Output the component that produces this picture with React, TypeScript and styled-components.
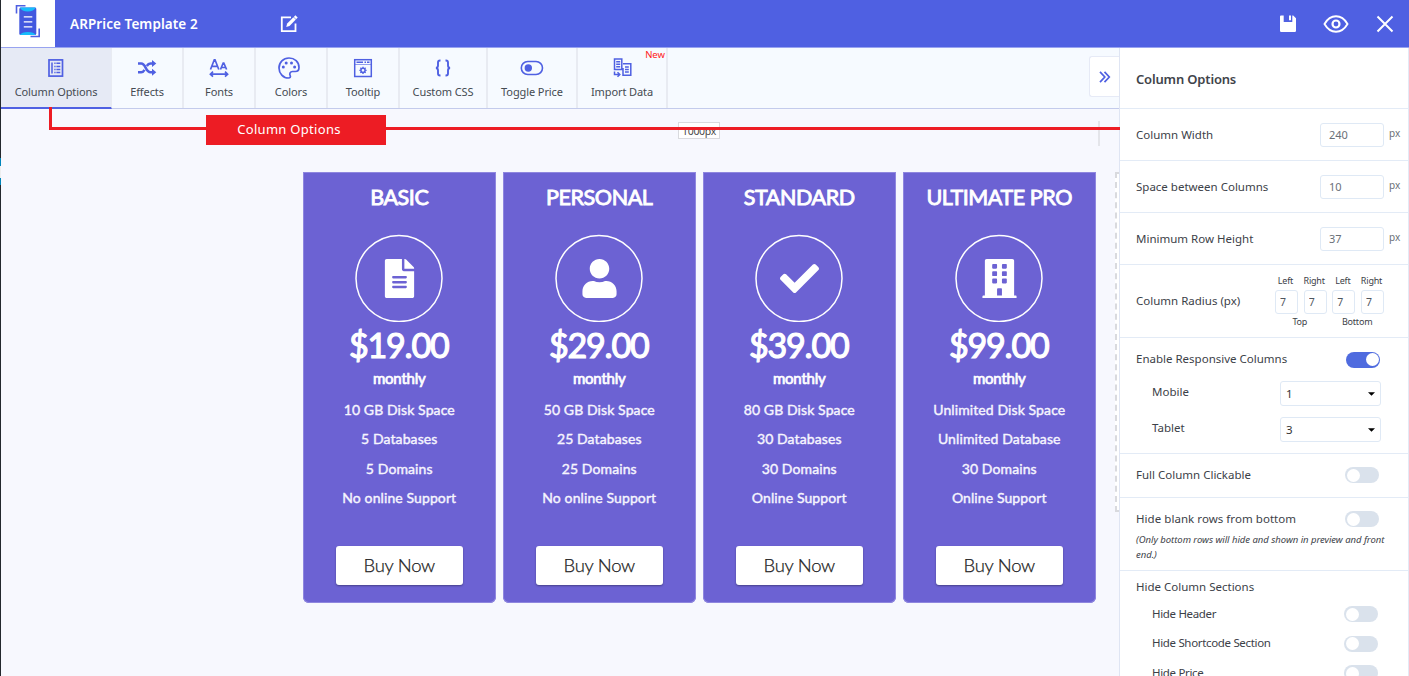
import React from "react";
import styled, { createGlobalStyle } from "styled-components";
import { FaBuilding, FaCheck, FaFileAlt, FaUser } from "react-icons/fa";

const BLUE = "#4f60e2";
const RED = "#ed1c24";
const UI = '"Noto Sans", "Open Sans", sans-serif';

const Global = createGlobalStyle`
  * { box-sizing: border-box; }
  body { margin: 0; background: #f7f8fe; font-family: ${UI}; color: #3c4148; }
  button, input { font: inherit; margin: 0; }
  svg { display: block; flex: none; }
`;

const Page = styled.div`
  position: relative;
  display: flex;
  width: 1409px;
  height: 676px;
  overflow: hidden;
`;

const Edge = styled.div`
  width: 1px;
  flex: none;
  background: linear-gradient(#23282d 158px, #0085ba 158px 166px, #eee 166px 178px, #0085ba 178px 185px, #23282d 185px);
`;

const Shell = styled.div`
  flex: 1;
  min-width: 0;
  display: flex;
  flex-direction: column;
`;

const TopBar = styled.header`
  display: flex;
  align-items: center;
  height: 48px;
  flex: none;
  background: ${BLUE};
  border-bottom: 1px solid #98a3f0;
`;

const LogoBox = styled.div`
  width: 54px;
  height: 47px;
  background: #fff;
  padding: 4px 0 0 12.5px;
`;

const TemplateName = styled.h1`
  margin: 0 0 0 15px;
  width: 210px;
  font-size: 13.5px;
  font-weight: 600;
  letter-spacing: 0.08px;
  color: #fff;
  white-space: nowrap;
`;

const TopActions = styled.div`
  display: flex;
  align-items: center;
  gap: 27px;
  margin-left: auto;
  padding-right: 15px;
`;

const Body = styled.div`
  flex: 1;
  min-height: 0;
  display: flex;
`;

const Workspace = styled.main`
  position: relative;
  width: 1118px;
  flex: none;
  overflow: hidden;
`;

const Toolbar = styled.nav`
  display: flex;
  height: 61px;
  background: #f6faff;
  border-bottom: 1px solid #c3cbec;
`;

const Tool = styled.button<{ $w: number; $active?: boolean }>`
  position: relative;
  display: flex;
  flex-direction: column;
  align-items: center;
  width: ${(p) => p.$w}px;
  flex: none;
  height: ${(p) => (p.$active ? 61 : 60)}px;
  padding: 8px 0 0;
  border: 0;
  border-right: ${(p) => (p.$active ? 1 : 2)}px solid #e8ebf2;
  border-bottom: ${(p) => (p.$active ? `2px solid ${BLUE}` : "0")};
  background: ${(p) => (p.$active ? "#e6eaf5" : "transparent")};
  color: ${BLUE};
`;

const ToolIcon = styled.span`
  display: grid;
  place-items: center;
  height: 24px;
`;

const ToolLabel = styled.span`
  margin-top: 3px;
  font-size: 11px;
  line-height: 18px;
  letter-spacing: -0.1px;
  color: #454b52;
  white-space: nowrap;
`;

const NewTag = styled.span`
  position: absolute;
  top: 0;
  right: 1px;
  font-size: 9.5px;
  line-height: 14px;
  color: #ff2020;
`;

const PanelToggle = styled.button`
  position: absolute;
  top: 8px;
  right: 0;
  width: 30px;
  height: 41px;
  display: grid;
  place-items: center;
  padding: 0;
  border: 1px solid #e6eaf6;
  border-right: 0;
  border-radius: 3px 0 0 3px;
  background: #fff;
`;

const Ruler = styled.div`
  display: flex;
  justify-content: center;
  align-items: flex-start;
  width: 801px;
  height: 25px;
  margin: 12px 0 0 298px;
  border: solid #e4e5ea;
  border-width: 0 2px 0 0;
  clip-path: inset(0);
`;

const RulerLabel = styled.span`
  width: 42px;
  height: 17px;
  margin: 1px 0 0 1px;
  border: 1px solid #d9dade;
  background: #fff;
  font-size: 10.5px;
  line-height: 16px;
  letter-spacing: -0.3px;
  text-align: center;
  color: #4a4a4a;
`;

const Plans = styled.section`
  display: flex;
  gap: 8px;
  margin: 26px 0 0 302px;
  width: 1000px;
`;

const Plan = styled.article`
  display: flex;
  flex-direction: column;
  align-items: center;
  width: 192.5px;
  height: 430.5px;
  flex: none;
  margin-right: -0.5px;
  border-radius: 0 0 6px 6px;
  background: #6c62d3;
  box-shadow: inset 0 0 0 1px #8f87df;
  color: #fff;
  font-family: Lato, sans-serif;
  white-space: nowrap;
`;

const PlanTitle = styled.h2`
  margin: 11px 0 0;
  font-size: 21.5px;
  line-height: 28px;
  font-weight: 400;
  letter-spacing: -0.42px;
  -webkit-text-stroke: 0.9px #fff;
`;

const PlanBadge = styled.div`
  display: grid;
  place-items: center;
  width: 88px;
  height: 88px;
  margin-top: 23px;
`;

const BadgeRing = styled.svg`
  grid-area: 1 / 1;
`;

const BadgeIcon = styled.span`
  grid-area: 1 / 1;
`;

const Price = styled.div`
  margin: 3px 0 0 -1px;
  font-size: 34px;
  line-height: 40px;
  font-weight: 400;
  letter-spacing: -1.2px;
  -webkit-text-stroke: 1.2px #fff;
`;

const Period = styled.div`
  margin-top: 3px;
  font-size: 15px;
  line-height: 20px;
  font-weight: 400;
  letter-spacing: -0.2px;
  -webkit-text-stroke: 0.7px #fff;
`;

const Features = styled.ul`
  list-style: none;
  margin: 7px 0 0;
  padding: 0;
  text-align: center;
  font-size: 14px;
  line-height: 29.4px;
  letter-spacing: 0.1px;
  -webkit-text-stroke: 0.4px #f6f5fe;
  color: #f6f5fe;
`;

const Buy = styled.button`
  width: 127px;
  height: 39px;
  margin-top: 33px;
  padding: 0;
  border: 0;
  border-radius: 3px;
  background: #fff;
  box-shadow: 0 1px 2px rgba(0, 0, 0, 0.35);
  font-family: Lato, sans-serif;
  font-weight: 300;
  font-size: 18.5px;
  letter-spacing: -0.3px;
  -webkit-text-stroke: 0.25px #222;
  color: #222;
`;

const AddColumn = styled.div`
  width: 192px;
  height: 340px;
  flex: none;
  margin-left: 12px;
  border: 2px dashed #d9dade;
  background: #fff;
`;

const Panel = styled.aside`
  flex: 1;
  background: #fff;
  border-left: 1px solid #dfe5f3;
  border-right: 1px solid #e3e9f5;
`;

const PanelTitle = styled.h2`
  display: flex;
  align-items: center;
  height: 61px;
  margin: 0;
  padding: 2px 0 0 16px;
  border-bottom: 1px solid #e3ebf6;
  font-size: 13px;
  font-weight: 600;
  letter-spacing: -0.17px;
  color: #3f444a;
`;

const Section = styled.section<{ $h: number }>`
  height: ${(p) => p.$h}px;
  padding: 0 0 0 16px;
  border-bottom: 1px solid #e3ebf6;
`;

const Row = styled.div<{ $h: number; $indent?: boolean; $end?: number }>`
  display: flex;
  align-items: center;
  justify-content: space-between;
  height: ${(p) => p.$h}px;
  padding: 0 ${(p) => p.$end ?? 28}px 0 ${(p) => (p.$indent ? 16 : 0)}px;
`;

const Label = styled.span<{ $lift?: number; $ls?: number }>`
  padding-bottom: ${(p) => p.$lift ?? 0}px;
  font-size: 11.5px;
  letter-spacing: ${(p) => p.$ls ?? 0}px;
  white-space: nowrap;
`;

const Unit = styled.span`
  width: 20px;
  padding: 0 0 3px 5px;
  font-size: 10px;
  color: #6b7077;
`;

const FieldGroup = styled.span`
  display: flex;
  align-items: center;
`;

const Field = styled.input`
  width: 64px;
  height: 24px;
  padding: 0 8px;
  border: 1px solid #dfe9f5;
  border-radius: 3px;
  background: #fff;
  font-size: 11px;
  color: #6a7078;
`;

const Radii = styled.div`
  display: grid;
  grid-template-columns: repeat(4, 23px);
  column-gap: 5.7px;
  justify-items: center;
  padding-top: 1px;
  font-size: 9px;
  line-height: 12px;
  letter-spacing: -0.2px;
`;

const RadiusField = styled(Field)`
  width: 23px;
  margin: 3px 0 2px;
  padding: 0 0 0 4px;
  font-size: 10.5px;
  color: #50565e;
`;

const RadiusSide = styled.span`
  margin-left: -2px;
`;

const Pair = styled.span`
  grid-column: span 2;
  margin-left: -2px;
`;

const Select = styled.button`
  display: flex;
  align-items: center;
  justify-content: space-between;
  width: 101px;
  height: 25px;
  padding: 0 5px;
  border: 1px solid #dfe9f5;
  border-radius: 3px;
  background: #fff;
  font-size: 11.5px;
  color: #333;
`;

const Switch = styled.span<{ $on?: boolean }>`
  display: flex;
  justify-content: ${(p) => (p.$on ? "flex-end" : "flex-start")};
  width: 34px;
  height: 16px;
  padding: 1.5px;
  border-radius: 8px;
  background: ${(p) => (p.$on ? "#4f6bdf" : "#dae2ec")};
  &::after {
    content: "";
    width: 13px;
    height: 13px;
    border-radius: 50%;
    background: #fff;
  }
`;

const Note = styled.p`
  margin: -8px 16px 0 0;
  font-size: 9.5px;
  line-height: 15px;
  letter-spacing: -0.03px;
  font-style: italic;
`;

const Callout = styled.div`
  position: absolute;
  left: 49px;
  top: 107px;
  width: 1071px;
  height: 38px;
  pointer-events: none;
`;

const CalloutLabel = styled.div`
  position: absolute;
  left: 157px;
  top: 8px;
  width: 180px;
  height: 30px;
  padding-right: 14px;
  background: ${RED};
  color: #fff;
  font-size: 13px;
  line-height: 28px;
  letter-spacing: 0.3px;
  text-align: center;
`;

const CalloutLines = styled.svg`
  position: absolute;
  inset: 0;
`;

const Caret = () => (
  <svg width="7" height="4" viewBox="0 0 7 4"><path d="M0 0.3h7L3.5 3.8z" fill="#000" /></svg>
);

const Logo = () => (
  <svg width="28" height="36" viewBox="0 0 28 36" fill="none">
    <path d="M2.500 9.500V1.700H11.500M16.500 32.500H25.200V24.500" stroke={BLUE} strokeWidth="1.600" />
    <rect x="5.300" y="3.500" width="17" height="27.500" rx="1.500" fill="#4258df" />
    <path d="M5.800 3.500H21.800Q19.800 7.500 13.800 7.500T5.800 3.500ZM5.800 31Q7.800 28 13.800 28T21.800 31Z" fill="#16bdfb" />
    <path d="M9.800 12.800H18.300M9.800 17.800H18.300M9.800 22.800H18.300" stroke="#fff" strokeWidth="1.300" />
  </svg>
);

const EditIcon = () => (
  <svg width="18" height="18" viewBox="0 0 18 18" fill="none" stroke="#fff">
    <path d="M11 2.300H1.800V16.200H15.500V8.500" strokeWidth="1.800" />
    <path d="M6.200 12L7.200 8.600L13.400 2.200L15.800 4.500L9.500 10.900Z" fill="#fff" stroke="none" />
    <path d="M14.600 1.100L16.900 3.400" strokeWidth="2.200" />
  </svg>
);

const ListIcon = () => (
  <svg width="16" height="18" viewBox="0 0 16 18" fill="none" stroke={BLUE}>
    <rect x="1" y="0.900" width="13.500" height="16.200" strokeWidth="1.700" />
    <path d="M4 3.500V14.500M6.300 4.300H7.600M8.400 4.300H12.300M6.300 7.400H7.600M8.400 7.400H12.300M6.300 10.500H7.600M8.400 10.500H12.300M6.300 13.500H7.600M8.400 13.500H12.300" strokeWidth="1.500" />
  </svg>
);

const EffectsIcon = () => (
  <svg width="20" height="16" viewBox="0 0 20 16" fill="none" stroke={BLUE} strokeWidth="2.500">
    <path d="M1 3.500H4.200C9 3.500 8.500 12.300 13.500 12.300H16M1 12.300H4.200C5.800 12.300 6.700 11.200 7.500 9.800M9.800 6C10.700 4.500 11.700 3.500 13.500 3.500H16" />
    <path d="M15 0L19.300 3.500L15 7ZM15 8.800L19.300 12.300L15 15.800Z" fill={BLUE} stroke="none" />
  </svg>
);

const FontsIcon = () => (
  <svg width="20" height="19" viewBox="0 0 20 19" fill="none" stroke={BLUE} strokeWidth="1.700">
    <path d="M1.500 10.500L5.300 0.800H6L9.800 10.500M2.800 7.300H8.500M11.500 10.500L14.200 4H14.800L17.600 10.500M12.500 8.500H16.600M1.500 15.200H18.500M4 12.700L1.400 15.200L4 17.700M16 12.700L18.600 15.200L16 17.700" />
  </svg>
);

const PaletteIcon = () => (
  <svg width="26" height="22" viewBox="2 0 22 22" preserveAspectRatio="xMidYMid" fill="none" stroke={BLUE} strokeWidth="1.700">
    <path d="M11 1C5.300 1 1 5.400 1 11C1 16.500 5.300 21 10.500 21C12.200 21 12.800 19.900 12.200 18.700C11.100 16.600 12.200 14.500 14.500 14.500H17.300C19.800 14.500 21 13 21 10.500C21 5 16.600 1 11 1Z" />
    <g fill={BLUE} stroke="none"><circle cx="5.300" cy="10" r="1.500" /><circle cx="8.200" cy="5.900" r="1.500" /><circle cx="13.500" cy="5.900" r="1.500" /><circle cx="16.600" cy="10" r="1.500" /></g>
  </svg>
);

const TooltipIcon = () => (
  <svg width="20" height="20" viewBox="0 0 20 20" fill="none" stroke={BLUE}>
    <rect x="1.700" y="1.700" width="16.600" height="16.800" strokeWidth="1.500" />
    <path d="M2 6.500H18" strokeWidth="1" opacity=".6" />
    <path d="M3.500 4.200H10M11.500 4.200H13M14 4.200H16.500" strokeWidth="1.500" />
    <circle cx="10" cy="12.300" r="2.100" strokeWidth="1.500" />
    <path d="M10 8.700V10M10 14.600V15.900M6.400 12.300H7.700M12.300 12.300H13.600M7.400 9.700L8.300 10.600M11.700 14L12.600 14.900M12.600 9.700L11.700 10.600M8.300 14L7.400 14.900" strokeWidth="1.300" />
  </svg>
);

const BracesIcon = () => (
  <svg width="16" height="18" viewBox="0 0 16 18" fill="none" stroke={BLUE} strokeWidth="1.900">
    <path d="M5.500 1.500H5C3.500 1.500 3 2.300 3 3.600V6.500C3 8 2.500 8.800 1 9C2.500 9.200 3 10 3 11.500V14.400C3 15.700 3.500 16.500 5 16.500H5.500M10.500 1.500H11C12.500 1.500 13 2.300 13 3.600V6.500C13 8 13.500 8.800 15 9C13.500 9.200 13 10 13 11.500V14.400C13 15.700 12.500 16.500 11 16.500H10.500" />
  </svg>
);

const ToggleIcon = () => (
  <svg width="24" height="16" viewBox="0 0 24 16" fill="none" stroke={BLUE} strokeWidth="1.600">
    <rect x="1.300" y="1.500" width="21.200" height="13" rx="6.500" />
    <circle cx="8.300" cy="8" r="3.700" fill={BLUE} stroke="none" />
  </svg>
);

const ImportIcon = () => (
  <svg width="20" height="20" viewBox="0 0 20 20" fill="none" stroke={BLUE} strokeWidth="1.500">
    <path d="M2.500 1H9.800V11.500H2.500ZM11 5.700H18.800V17.300H11V10" />
    <path d="M4.200 3.800H8.200M4.200 6.300H8.200M4.200 8.800H8.200M13 9H16.800M13 11.500H16.800M13 14H16.800M2.500 13.500V16.500H7.500M5.500 14.200L7.800 16.500L5.500 18.800" />
  </svg>
);

const SaveIcon = () => (
  <svg width="16" height="18" viewBox="0 0 16 18">
    <path d="M1 0.500H3.700V7H12.300V0.500H13.200L16 3.300V15.800Q16 17 14.800 17H1.200Q0 17 0 15.800V1.500Q0 .5 1 .5ZM9 .5H11V5.200H9Z" fill="#fff" />
  </svg>
);

const EyeIcon = () => (
  <svg width="26" height="18" viewBox="0 0 26 18" fill="none" stroke="#fff" strokeWidth="1.900">
    <path d="M1.500 9C4.500 3.800 8.500 1.300 13 1.300S21.500 3.800 24.500 9C21.500 14.200 17.500 16.700 13 16.700S4.500 14.200 1.500 9Z" />
    <circle cx="13" cy="9" r="3.500" strokeWidth="2.200" />
  </svg>
);

const CloseIcon = () => (
  <svg width="18" height="18" viewBox="0 0 18 18"><path d="M1.500 1.500L16.500 16.500M16.500 1.500L1.500 16.500" stroke="#fff" strokeWidth="2" /></svg>
);

const ChevronsIcon = () => (
  <svg width="12" height="12" viewBox="0 0 12 12" fill="none" stroke={BLUE} strokeWidth="1.700"><path d="M1 .8L5.800 6L1 11.200M5.500 .8L10.300 6L5.500 11.200" /></svg>
);

const tools = [
  { label: "Column Options", icon: <ListIcon />, w: 111, active: true },
  { label: "Effects", icon: <EffectsIcon />, w: 72 },
  { label: "Fonts", icon: <FontsIcon />, w: 72 },
  { label: "Colors", icon: <PaletteIcon />, w: 72 },
  { label: "Tooltip", icon: <TooltipIcon />, w: 72 },
  { label: "Custom CSS", icon: <BracesIcon />, w: 88 },
  { label: "Toggle Price", icon: <ToggleIcon />, w: 90 },
  { label: "Import Data", icon: <ImportIcon />, w: 90, tag: "New" },
];

const plans = [
  { name: "BASIC", price: "$19.00", Icon: FaFileAlt, rows: ["10 GB Disk Space", "5 Databases", "5 Domains", "No online Support"] },
  { name: "PERSONAL", price: "$29.00", Icon: FaUser, rows: ["50 GB Disk Space", "25 Databases", "25 Domains", "No online Support"] },
  { name: "STANDARD", price: "$39.00", Icon: FaCheck, rows: ["80 GB Disk Space", "30 Databases", "30 Domains", "Online Support"] },
  { name: "ULTIMATE PRO", price: "$99.00", Icon: FaBuilding, rows: ["Unlimited Disk Space", "Unlimited Database", "30 Domains", "Online Support"] },
];

const sizes = [
  { label: "Column Width", value: "240" },
  { label: "Space between Columns", value: "10" },
  { label: "Minimum Row Height", value: "37" },
];

export default function App() {
  return (
    <Page>
      <Global />
      <Edge />
      <Shell>
        <TopBar>
          <LogoBox><Logo /></LogoBox>
          <TemplateName>ARPrice Template 2</TemplateName>
          <EditIcon />
          <TopActions><SaveIcon /><EyeIcon /><CloseIcon /></TopActions>
        </TopBar>
        <Body>
          <Workspace>
            <Toolbar>
              {tools.map((t) => (
                <Tool key={t.label} $w={t.w} $active={t.active}>
                  <ToolIcon>{t.icon}</ToolIcon>
                  <ToolLabel>{t.label}</ToolLabel>
                  {t.tag && <NewTag>{t.tag}</NewTag>}
                </Tool>
              ))}
            </Toolbar>
            <PanelToggle><ChevronsIcon /></PanelToggle>
            <Ruler><RulerLabel>1000px</RulerLabel></Ruler>
            <Plans>
              {plans.map(({ name, price, Icon, rows }) => (
                <Plan key={name}>
                  <PlanTitle>{name}</PlanTitle>
                  <PlanBadge>
                    <BadgeRing width="88" height="88" viewBox="0 0 88 88">
                      <circle cx="44" cy="44.500" r="43" fill="none" stroke="#fff" strokeWidth="1.500" />
                    </BadgeRing>
                    <BadgeIcon><Icon size={39} /></BadgeIcon>
                  </PlanBadge>
                  <Price>{price}</Price>
                  <Period>monthly</Period>
                  <Features>{rows.map((r) => <li key={r}>{r}</li>)}</Features>
                  <Buy>Buy Now</Buy>
                </Plan>
              ))}
              <AddColumn />
            </Plans>
          </Workspace>
          <Panel>
            <PanelTitle>Column Options</PanelTitle>
            {sizes.map((s) => (
              <Section key={s.label} $h={52}>
                <Row $h={51} $end={4}>
                  <Label>{s.label}</Label>
                  <FieldGroup><Field defaultValue={s.value} /><Unit>px</Unit></FieldGroup>
                </Row>
              </Section>
            ))}
            <Section $h={73}>
              <Row $h={72} $end={24}>
                <Label $lift={1}>Column Radius (px)</Label>
                <Radii>
                  <RadiusSide>Left</RadiusSide><RadiusSide>Right</RadiusSide>
                  <RadiusSide>Left</RadiusSide><RadiusSide>Right</RadiusSide>
                  {[0, 1, 2, 3].map((i) => <RadiusField key={i} defaultValue="7" />)}
                  <Pair>Top</Pair><Pair>Bottom</Pair>
                </Radii>
              </Row>
            </Section>
            <Section $h={116}>
              <Row $h={43}><Label $lift={2}>Enable Responsive Columns</Label><Switch $on /></Row>
              <Row $h={25} $indent $end={27}><Label $lift={4}>Mobile</Label><Select>1<Caret /></Select></Row>
              <Row $h={47} $indent $end={27}><Label $lift={4}>Tablet</Label><Select>3<Caret /></Select></Row>
            </Section>
            <Section $h={44}>
              <Row $h={42} $end={29}><Label $lift={1}>Full Column Clickable</Label><Switch /></Row>
            </Section>
            <Section $h={73}>
              <Row $h={42} $end={29}><Label $lift={1} $ls={0.05}>Hide blank rows from bottom</Label><Switch /></Row>
              <Note>(Only bottom rows will hide and shown in preview and front end.)</Note>
            </Section>
            <Section $h={140}>
              <Row $h={31}><Label>Hide Column Sections</Label></Row>
              <Row $h={24} $indent $end={30}><Label $lift={2} $ls={-0.33}>Hide Header</Label><Switch /></Row>
              <Row $h={35} $indent $end={30}><Label $lift={2} $ls={-0.33}>Hide Shortcode Section</Label><Switch /></Row>
              <Row $h={24} $indent $end={30}><Label $lift={2} $ls={-0.33}>Hide Price</Label><Switch /></Row>
            </Section>
          </Panel>
        </Body>
      </Shell>
      <Callout>
        <CalloutLines width="1071" height="38"><path d="M1.500 0V21.500H1071" fill="none" stroke={RED} strokeWidth="3" /></CalloutLines>
        <CalloutLabel>Column Options</CalloutLabel>
      </Callout>
    </Page>
  );
}
